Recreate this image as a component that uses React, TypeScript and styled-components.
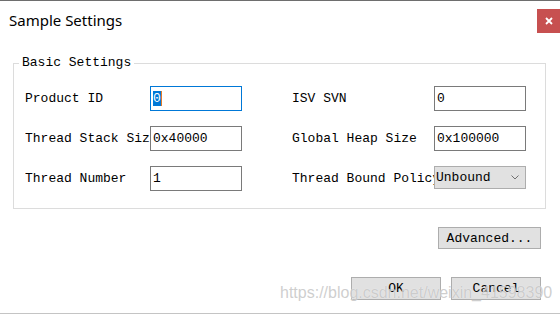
import React from "react";
import styled, { createGlobalStyle } from "styled-components";

const Global = createGlobalStyle`
  html, body { margin: 0; padding: 0; background: #fff; overflow: hidden; }
  * { box-sizing: border-box; }
`;

const mono = `"Liberation Mono", "DejaVu Sans Mono", monospace`;

const Window = styled.div`
  position: relative;
  width: 560px;
  height: 314px;
  background: #fff;
  border-top: 1px solid #6e6e6e;
  border-bottom: 1px solid #c4c4c4;
  display: flex;
  flex-direction: column;
  font-family: ${mono};
  font-size: 13px;
  color: #000;
`;

const TitleBar = styled.div`
  height: 41px;
  display: flex;
  justify-content: space-between;
  align-items: flex-start;
`;

const Title = styled.div`
  margin: 9px 0 0 9px;
  font-family: "Noto Sans", "Open Sans", sans-serif;
  font-size: 15px;
  line-height: 20px;
  color: #000;
`;

const CloseButton = styled.div`
  margin-top: 8px;
  width: 23px;
  height: 24px;
  background: #c75050;
  display: flex;
  align-items: center;
  justify-content: center;
`;

const Group = styled.fieldset`
  margin: 14px 14px 0 13px;
  padding: 16px 0 17px 11px;
  border: 1px solid #dcdcdc;
  min-width: 0;
`;

const Legend = styled.legend`
  margin-left: -6px;
  padding: 0 3px;
  line-height: 14px;
  font-size: 13px;
`;

const FieldGrid = styled.div`
  display: grid;
  grid-template-columns: 217px 234px;
  grid-auto-rows: 25px;
  column-gap: 50px;
  row-gap: 15px;
`;

const Field = styled.div`
  display: flex;
  align-items: center;
`;

const Label = styled.div<{ $w: number }>`
  width: ${(p) => p.$w}px;
  flex: none;
  overflow: hidden;
  white-space: nowrap;
  line-height: 16px;
`;

const TextBox = styled.div<{ $focused?: boolean }>`
  width: 92px;
  height: 25px;
  flex: none;
  border: 1px solid ${(p) => (p.$focused ? "#0078d7" : "#7a7a7a")};
  padding-left: 2px;
  display: flex;
  align-items: center;
  white-space: nowrap;
  background: #fff;
`;

const Selected = styled.span`
  background: #0078d7;
  color: #fff;
  line-height: 15px;
  border-right: 1px solid #e07a2a;
`;

const Combo = styled.div`
  width: 92px;
  height: 23px;
  flex: none;
  align-self: flex-start;
  background: #e1e1e1;
  border: 1px solid #adadad;
  padding: 0 6px 0 1px;
  display: flex;
  align-items: center;
  justify-content: space-between;
`;

const ButtonRow = styled.div<{ $top: number }>`
  margin-top: ${(p) => p.$top}px;
  padding-right: 19px;
  display: flex;
  justify-content: flex-end;
  gap: 10px;
`;

const Button = styled.div<{ $w: number; $h: number }>`
  width: ${(p) => p.$w}px;
  height: ${(p) => p.$h}px;
  background: #e1e1e1;
  border: 1px solid #adadad;
  display: flex;
  align-items: center;
  justify-content: center;
  white-space: nowrap;
`;

const Watermark = styled.div`
  position: absolute;
  left: 280px;
  top: 282px;
  font-family: "Liberation Sans", Arial, sans-serif;
  font-size: 16px;
  line-height: 20px;
  color: rgba(190, 190, 190, 0.75);
  text-shadow: 0 0 1px rgba(255, 255, 255, 0.8);
  white-space: nowrap;
  pointer-events: none;
`;

const Chevron = () => (
  <svg width="8" height="5" viewBox="0 0 8 5">
    <path d="M0.5 0.5 L4 4 L7.5 0.5" fill="none" stroke="#707070" strokeWidth="1" />
  </svg>
);

const CloseIcon = () => (
  <svg width="8" height="8" viewBox="0 0 8 8">
    <path d="M1 1 L7 7 M7 1 L1 7" stroke="#fff" strokeWidth="1.8" />
  </svg>
);

export default function App() {
  return (
    <>
      <Global />
      <Window>
        <TitleBar>
          <Title>Sample Settings</Title>
          <CloseButton>
            <CloseIcon />
          </CloseButton>
        </TitleBar>
        <Group>
          <Legend>Basic Settings</Legend>
          <FieldGrid>
            <Field>
              <Label $w={125}>Product ID</Label>
              <TextBox $focused>
                <Selected>0</Selected>
              </TextBox>
            </Field>
            <Field>
              <Label $w={142}>ISV SVN</Label>
              <TextBox>0</TextBox>
            </Field>
            <Field>
              <Label $w={125}>Thread Stack Size</Label>
              <TextBox>0x40000</TextBox>
            </Field>
            <Field>
              <Label $w={142}>Global Heap Size</Label>
              <TextBox>0x100000</TextBox>
            </Field>
            <Field>
              <Label $w={125}>Thread Number</Label>
              <TextBox>1</TextBox>
            </Field>
            <Field>
              <Label $w={142}>Thread Bound Policy</Label>
              <Combo>
                <span>Unbound</span>
                <Chevron />
              </Combo>
            </Field>
          </FieldGrid>
        </Group>
        <ButtonRow $top={18}>
          <Button $w={103} $h={22}>Advanced...</Button>
        </ButtonRow>
        <ButtonRow $top={28}>
          <Button $w={90} $h={23}>OK</Button>
          <Button $w={90} $h={23}>Cancel</Button>
        </ButtonRow>
        <Watermark>https://blog.csdn.net/weixin_41598390</Watermark>
      </Window>
    </>
  );
}
